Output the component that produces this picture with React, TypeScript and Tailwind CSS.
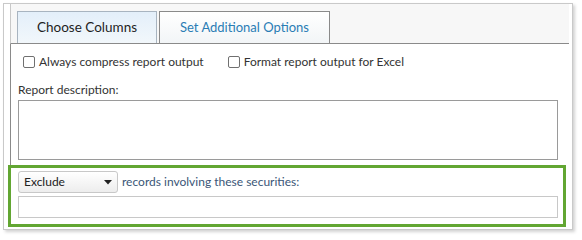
import React from 'react';

const font = { fontFamily: 'Lato, "Open Sans", sans-serif' };

function Checkbox({ label }: { label: string }) {
  return (
    <label className="flex items-center h-[17px] gap-[4px] text-[12px] text-[#333]">
      <span className="w-[12px] h-[12px] border border-[#707070] rounded-[2px] bg-white" />
      <span>{label}</span>
    </label>
  );
}

export default function App() {
  return (
    <div className="w-[582px] h-[240px] bg-white pt-[3px] pl-[3px]" style={font}>
      {/* outer frame */}
      <div className="w-[570px] h-[227px] border border-[#c9c9c9] bg-white pl-[6px] shadow-[2px_2px_3px_rgba(0,0,0,0.18)]">
        <div className="w-[559px]">
          {/* tab strip */}
          <div className="h-[40px] bg-[#f7f7f7] border-l border-[#c8c8c8] border-b border-b-[#8a8a8a] pl-[6px] pt-[7px] flex gap-[2px]">
            <div className="w-[140px] h-[32px] border border-b-0 border-[#a8b4c0] bg-gradient-to-b from-[#e3effa] to-[#f2f7fb] flex items-center justify-center text-[13.5px] text-[#1e1e1e]">
              Choose Columns
            </div>
            <div className="w-[171px] h-[32px] border border-b-0 border-[#8a8a8a] bg-gradient-to-b from-white to-[#f2f5f7] flex items-center justify-center text-[13px] text-[#2a7db5]">
              Set Additional Options
            </div>
          </div>

          {/* content */}
          <div className="border-l border-[#8a8a8a] bg-white pl-[7px] pt-[9px] h-[121px]">
            <div className="flex gap-[24px] pl-[5px]">
              <Checkbox label="Always compress report output" />
              <Checkbox label="Format report output for Excel" />
            </div>
            <div className="mt-[12px] h-[16px] leading-[16px] text-[12px] text-[#333]">Report description:</div>
            <div className="mt-[2px] w-[540px] h-[60px] border border-[#9a9a9a] bg-white" />
          </div>

          {/* highlighted filter */}
          <div className="-ml-[2px] w-[558px] border-[3px] border-[#62a632] pl-[7px] pt-[3px] pb-[6px] bg-white">
            <div className="flex items-center gap-[4px]">
              <div className="w-[100px] h-[22px] border border-[#c8c8c8] rounded-[3px] bg-gradient-to-b from-white to-[#ededed] flex items-center justify-between pl-[5px] pr-[5px] text-[12px] text-[#222]">
                <span>Exclude</span>
                <svg width="8" height="5" viewBox="0 0 8 5">
                  <path d="M0 0 H8 L4 4.5 Z" fill="#222" />
                </svg>
              </div>
              <span className="text-[12px] text-[#3a5677]">records involving these securities:</span>
            </div>
            <div className="mt-[3px] w-[540px] h-[22px] border border-[#c8c8c8] bg-white" />
          </div>
        </div>
      </div>
    </div>
  );
}
